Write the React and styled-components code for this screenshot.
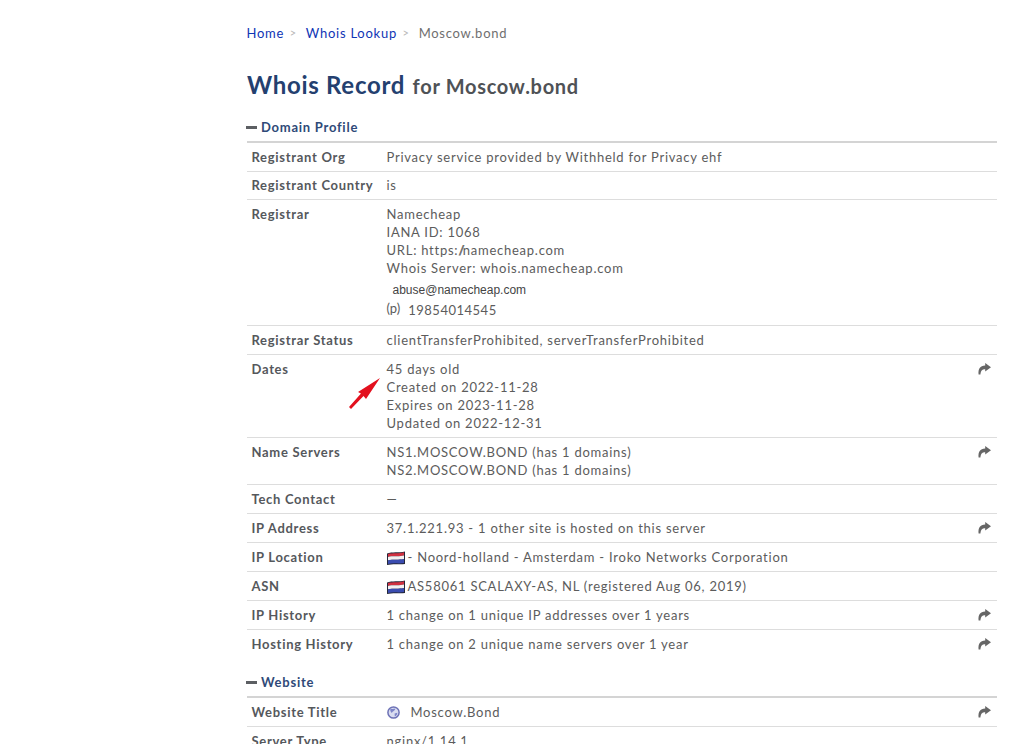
import React from 'react';
import styled, { createGlobalStyle } from 'styled-components';

const GlobalStyle = createGlobalStyle`
html, body {
  margin: 0;
  padding: 0;
  background: #ffffff;
  overflow: hidden;
}
body {
  height: 744px;
  font-family: 'Lato', sans-serif;
  font-size: 13px;
  color: #555555;
  letter-spacing: 0.75px;
}
`;

const Page = styled.div`
  position: relative;
  height: 744px;
  overflow: hidden;
  padding: 24px 25px 0 247px;
`;
const Crumbs = styled.nav`
  display: flex;
  align-items: center;
  height: 18px;
  line-height: 18px;
  margin-left: -0.5px;
`;
const Crumb = styled.a`
  color: #0f35b5;
  font-size: 13px;
`;
const CrumbCurrent = styled.span`
  color: #6f6f6f;
`;
const CrumbSep = styled.span`
  color: #b8b8b8;
  font-size: 11px;
  margin: 0 9px 0 5.5px;
`;
const Title = styled.h1`
  margin: 25px 0 0;
  height: 36px;
  line-height: 36px;
  font-size: 24px;
  font-weight: 700;
  color: #24406f;
  letter-spacing: 0.7px;
`;
const TitleSub = styled.small`
  font-size: 20px;
  font-weight: 700;
  color: #4f5256;
  margin-left: 1px;
`;
const SectionHead = styled.h2`
  display: flex;
  align-items: center;
  gap: 4px;
  margin: ${(p) => p.$top}px 0 0 -1px;
  height: 18px;
  font-size: 13px;
  line-height: 18px;
  font-weight: 700;
  color: #2f4a78;
`;
const Dash = styled.span`
  width: 11px;
  height: 3px;
  background: #5c5f63;
`;
const Table = styled.div`
  margin-top: 5px;
  border-top: 2px solid #d4d4d4;
`;
const Row = styled.div`
  display: grid;
  grid-template-columns: 135px 1fr 19px;
  border-bottom: ${(p) => (p.$last ? 'none' : '1px solid #dddddd')};
  padding: ${(p) => (p.$tight ? '4px 0 5px 4.5px' : '5px 0 5px 4.5px')};
  line-height: 18px;
`;
const Label = styled.div`
  font-weight: 700;
  color: #55585c;
  letter-spacing: 0.7px;
`;
const Value = styled.div`
  color: #5c5c5c;
  min-width: 0;
`;
const Line = styled.div`
  display: flex;
  align-items: center;
`;
const Slashes = styled.span`
  letter-spacing: -2.25px;
`;
const Email = styled.div`
  font-family: 'Liberation Sans', sans-serif;
  font-size: 12px;
  letter-spacing: 0;
  line-height: 18px;
  margin: 4px 0 0 6px;
  color: #444444;
`;
const Phone = styled.div`
  display: flex;
  line-height: 18px;
  margin: 2px 0 1px;
  letter-spacing: 0.5px;
`;
const PhoneTag = styled.span`
  font-size: 13px;
  letter-spacing: 0;
  margin: -2px 8px 0 0;
`;
const Share = styled.div`
  display: flex;
  justify-content: flex-start;
  padding-top: 3px;
`;
const FlagBox = styled.svg`
  width: 18px;
  height: 14px;
  margin: 1px 3px 0 0;
  flex: none;
`;
const GlobeBox = styled.svg`
  width: 13px;
  height: 13px;
  margin: 1px 11px 0 0;
  flex: none;
`;
const MarkerArrow = styled.svg`
  position: absolute;
  left: 346px;
  top: 376px;
  width: 38px;
  height: 36px;
`;

const ShareIcon = () => (
  <svg width="13" height="12" viewBox="0 0 13 12">
    <path d="M7.2 0 L13 4.3 L7.2 8.6 V6.2 C5 6.1 3 6.6 2.4 11.5 H0.6 C0 6 2 2.4 7.2 2.4 Z" fill="#666666" />
  </svg>
);

const Flag = () => (
  <FlagBox viewBox="0 0 18 14">
    <path d="M0 2.5 C5 0.5 12 2 18 0.5 V13 C12 13.5 5 12.5 0 14 Z" fill="#25283a" />
    <path d="M1 3 C6 1.5 12 3 17 1.2 V4.6 C12 6 6 4.5 1 6 Z" fill="#d03040" />
    <path d="M1 6 C6 4.5 12 6 17 4.6 V8 C12 9.4 6 8 1 9.4 Z" fill="#f4f0f0" />
    <path d="M1 9.4 C6 8 12 9.4 17 8 V12 C12 13 6 11.6 1 13 Z" fill="#3a4cb0" />
  </FlagBox>
);

const Globe = () => (
  <GlobeBox viewBox="0 0 13 13">
    <circle cx="6.5" cy="6.5" r="5.6" fill="#d9dcf0" stroke="#6d72b6" strokeWidth="1.5" />
    <path d="M3.5 2.5 C5 3.4 7 2.6 8.5 2.5 C8 5 5.5 5 4.8 7 C3.6 6 2.8 4.2 3.5 2.5 Z M7.6 7.6 L10.4 6.8 C10.4 8.6 9 10.2 7.8 10.4 Z" fill="#7d84c8" />
  </GlobeBox>
);

const InfoRow = ({ label, share, last, tight, children }) => (
  <Row $last={last} $tight={tight}>
    <Label>{label}</Label>
    <Value>{children}</Value>
    <Share>{share && <ShareIcon />}</Share>
  </Row>
);

export default function App() {
  return (
    <Page>
      <GlobalStyle />
      <Crumbs>
        <Crumb>Home</Crumb>
        <CrumbSep>&gt;</CrumbSep>
        <Crumb>Whois Lookup</Crumb>
        <CrumbSep>&gt;</CrumbSep>
        <CrumbCurrent>Moscow.bond</CrumbCurrent>
      </Crumbs>
      <Title>
        Whois Record <TitleSub>for Moscow.bond</TitleSub>
      </Title>
      <SectionHead $top={15}>
        <Dash />
        Domain Profile
      </SectionHead>
      <Table>
        <InfoRow label="Registrant Org">Privacy service provided by Withheld for Privacy ehf</InfoRow>
        <InfoRow label="Registrant Country" tight>is</InfoRow>
        <InfoRow label="Registrar">
          <div>Namecheap</div>
          <div>IANA ID: 1068</div>
          <div>URL: https:<Slashes>//</Slashes>namecheap.com</div>
          <div>Whois Server: whois.namecheap.com</div>
          <Email>abuse@namecheap.com</Email>
          <Phone>
            <PhoneTag>(p)</PhoneTag>
            19854014545
          </Phone>
        </InfoRow>
        <InfoRow label="Registrar Status">clientTransferProhibited, serverTransferProhibited</InfoRow>
        <InfoRow label="Dates" share>
          <div>45 days old</div>
          <div>Created on 2022-11-28</div>
          <div>Expires on 2023-11-28</div>
          <div>Updated on 2022-12-31</div>
        </InfoRow>
        <InfoRow label="Name Servers" share>
          <div>NS1.MOSCOW.BOND (has 1 domains)</div>
          <div>NS2.MOSCOW.BOND (has 1 domains)</div>
        </InfoRow>
        <InfoRow label="Tech Contact">—</InfoRow>
        <InfoRow label="IP Address" share>37.1.221.93 - 1 other site is hosted on this server</InfoRow>
        <InfoRow label="IP Location">
          <Line>
            <Flag />- Noord-holland - Amsterdam - Iroko Networks Corporation
          </Line>
        </InfoRow>
        <InfoRow label="ASN">
          <Line>
            <Flag />AS58061 SCALAXY-AS, NL (registered Aug 06, 2019)
          </Line>
        </InfoRow>
        <InfoRow label="IP History" share>1 change on 1 unique IP addresses over 1 years</InfoRow>
        <InfoRow label="Hosting History" share last>1 change on 2 unique name servers over 1 year</InfoRow>
      </Table>
      <SectionHead $top={15}>
        <Dash />
        Website
      </SectionHead>
      <Table>
        <InfoRow label="Website Title" share>
          <Line>
            <Globe />
            Moscow.Bond
          </Line>
        </InfoRow>
        <InfoRow label="Server Type" last>nginx/1.14.1</InfoRow>
      </Table>
      <MarkerArrow viewBox="0 0 38 36">
        <path d="M34 2 L20 23 L17.5 20 L5 33 L3 31 L15 17.5 L12 16 Z" fill="#e3101e" />
      </MarkerArrow>
    </Page>
  );
}
